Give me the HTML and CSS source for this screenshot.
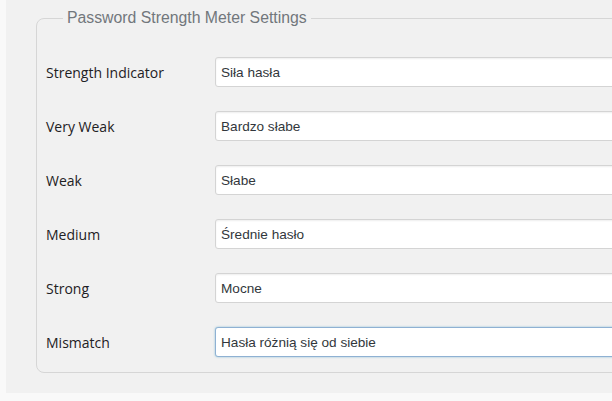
FILE: index.html
```html
<!DOCTYPE html>
<html lang="pl">
<head>
  <meta charset="UTF-8" />
  <title>Password Strength Meter Settings</title>
  <link rel="stylesheet" href="styles.css">
</head>
<body>

  <div class="page">
    <fieldset class="settings">
      <legend>Password Strength Meter Settings</legend>

      <div class="row">
        <label for="indicator">Strength Indicator</label>
        <input id="indicator" type="text" value="Siła hasła">
      </div>
      <div class="row">
        <label for="very-weak">Very Weak</label>
        <input id="very-weak" type="text" value="Bardzo słabe">
      </div>
      <div class="row">
        <label for="weak">Weak</label>
        <input id="weak" type="text" value="Słabe">
      </div>
      <div class="row">
        <label for="medium">Medium</label>
        <input id="medium" type="text" value="Średnie hasło">
      </div>
      <div class="row">
        <label for="strong">Strong</label>
        <input id="strong" type="text" value="Mocne">
      </div>
      <div class="row">
        <label for="mismatch">Mismatch</label>
        <input id="mismatch" class="focus" type="text" value="Hasła różnią się od siebie">
      </div>
    </fieldset>
  </div>

</body>
</html>
```

FILE: styles.css
```css
* {
  box-sizing: border-box;
}
html, body {
  margin: 0;
  padding: 0;
  background-color: #f9f9f9;
}
.page {
  margin-left: 6px;
  height: 393px;
  padding: 9px 0 0 30px;
  background-color: #f1f1f1;
  overflow: hidden;
}
.settings {
  width: 640px;
  margin: 0;
  padding: 30px 0 15px 9px;
  border: 1px solid #d6d6d6;
  border-radius: 8px;
}
.settings legend {
  margin-left: 17px;
  padding: 0 4px;
  font-family: "Liberation Sans", Arial, sans-serif;
  font-size: 15.8px;
  line-height: 18px;
  color: #72777c;
}
.row {
  display: grid;
  grid-template-columns: 169px 1fr;
  align-items: center;
  height: 30px;
  margin-top: 24px;
}
.row:first-of-type {
  margin-top: 0;
}
.row label {
  font-family: "Open Sans", sans-serif;
  font-size: 14px;
  color: #1e2124;
}
.row input {
  width: 420px;
  height: 30px;
  padding: 0 5px;
  border: 1px solid #d4d4d4;
  border-radius: 3px;
  background-color: #fff;
  box-shadow: inset 0 1px 2px rgba(0,0,0,0.07);
  font-family: "Liberation Sans", Arial, sans-serif;
  font-size: 13.6px;
  color: #32373c;
  outline: none;
}
.row input.focus {
  border-color: #8fb1d3;
  box-shadow: 0 0 2px rgba(30,140,190,0.5);
}
```
